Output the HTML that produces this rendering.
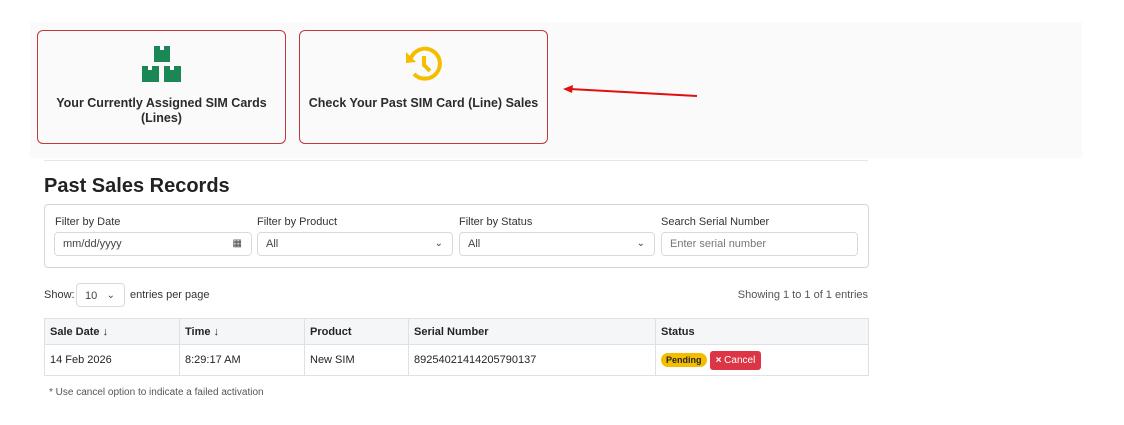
<!DOCTYPE html><html><head><style>
body{margin:0;width:1124px;height:425px;background:#fff;font-family:"Liberation Sans",sans-serif;color:#212529;position:relative;overflow:hidden}
.a{position:absolute}
.panel{left:30px;top:22px;width:1052px;height:136px;background:#fafafa}
.card{top:30px;width:247px;height:112px;border:1px solid #c0393b;border-radius:6px;background:#fafafa;text-align:center;font-size:12.5px;font-weight:bold;color:#2b2b2b}
.lbl{font-size:11px;color:#333}
.inp{height:22px;border:1px solid #d8dbde;border-radius:4px;background:#fff;font-size:11px;color:#444;line-height:22px;padding-left:8px;box-sizing:border-box}
.chev{position:absolute;right:9px;top:4px;font-size:10px}
table{border-collapse:collapse;font-size:11px;table-layout:fixed}
td,th{border:1px solid #dee2e6;text-align:left;padding:0 5px}
th{background:#f5f6f7;height:25px}
td{height:30px}
</style></head><body>
<div class="a panel"></div>
<div class="a card" style="left:37px">
<svg class="a" style="left:104px;top:15px" width="40" height="37" viewBox="0 0 40 37"><g fill="#1a8754"><rect x="12" y="0" width="16" height="16"/><rect x="0" y="20" width="17" height="16"/><rect x="22" y="20" width="17" height="16"/></g><g fill="#fff"><rect x="18" y="0" width="4" height="4"/><rect x="6" y="20" width="4" height="4"/><rect x="28" y="20" width="4" height="4"/></g></svg>
<div class="a" style="left:0;right:0;top:65px;line-height:15px">Your Currently Assigned SIM Cards<br>(Lines)</div></div>
<div class="a card" style="left:299px">
<svg class="a" style="left:104px;top:13px" width="40" height="40" viewBox="0 0 40 40"><path d="M7 14 A15 15 0 1 1 10 30" fill="none" stroke="#f5bd00" stroke-width="4"/><path d="M2 8 L12 18 L2 19 Z" fill="#f5bd00"/><path d="M20 12 V21 L26 27" fill="none" stroke="#f5bd00" stroke-width="4"/></svg>
<div class="a" style="left:0;right:0;top:65px">Check Your Past SIM Card (Line) Sales</div></div>
<svg class="a" style="left:560px;top:84px" width="140" height="16"><line x1="137" y1="12" x2="10" y2="5" stroke="#e01010" stroke-width="2"/><path d="M3 5 L13 1 L12 9 Z" fill="#e01010"/></svg>
<div class="a" style="left:44px;top:160px;width:824px;height:1px;background:#e6e6e6"></div>
<div class="a" style="left:44px;top:175px;font-size:20px;font-weight:bold;color:#222">Past Sales Records</div>
<div class="a" style="left:44px;top:204px;width:823px;height:62px;border:1px solid #d4d7da;border-radius:4px"></div>
<div class="a lbl" style="left:55px;top:216px">Filter by Date</div>
<div class="a lbl" style="left:257px;top:216px">Filter by Product</div>
<div class="a lbl" style="left:459px;top:216px">Filter by Status</div>
<div class="a lbl" style="left:661px;top:216px">Search Serial Number</div>
<div class="a inp" style="left:54px;top:232px;width:198px;height:24px">mm/dd/yyyy<span class="chev" style="top:0">▦</span></div>
<div class="a inp" style="left:257px;top:232px;width:196px;height:24px">All<span class="chev" style="top:0">⌄</span></div>
<div class="a inp" style="left:459px;top:232px;width:196px;height:24px">All<span class="chev" style="top:0">⌄</span></div>
<div class="a inp" style="left:661px;top:232px;width:197px;height:24px;color:#777">Enter serial number</div>
<div class="a lbl" style="left:44px;top:289px">Show:</div>
<div class="a inp" style="left:76px;top:283px;width:49px;height:24px;line-height:24px">10<span class="chev" style="top:0">⌄</span></div>
<div class="a lbl" style="left:130px;top:289px">entries per page</div>
<div class="a lbl" style="right:256px;top:289px;color:#555">Showing 1 to 1 of 1 entries</div>
<table class="a" style="left:44px;top:318px;width:825px">
<colgroup><col style="width:135px"><col style="width:125px"><col style="width:104px"><col style="width:247px"><col></colgroup>
<tr><th>Sale Date ↓</th><th>Time ↓</th><th>Product</th><th>Serial Number</th><th>Status</th></tr>
<tr><td>14 Feb 2026</td><td>8:29:17 AM</td><td>New SIM</td><td>89254021414205790137</td><td><span style="background:#f5bd00;border-radius:8px;font-size:9px;font-weight:bold;padding:2px 5px">Pending</span> <span style="background:#dc3545;color:#fff;border-radius:3px;padding:4px 6px;font-size:10px"><b>×</b> Cancel</span></td></tr>
</table>
<div class="a" style="left:49px;top:387px;font-size:10px;color:#555">* Use cancel option to indicate a failed activation</div>
</body></html>
